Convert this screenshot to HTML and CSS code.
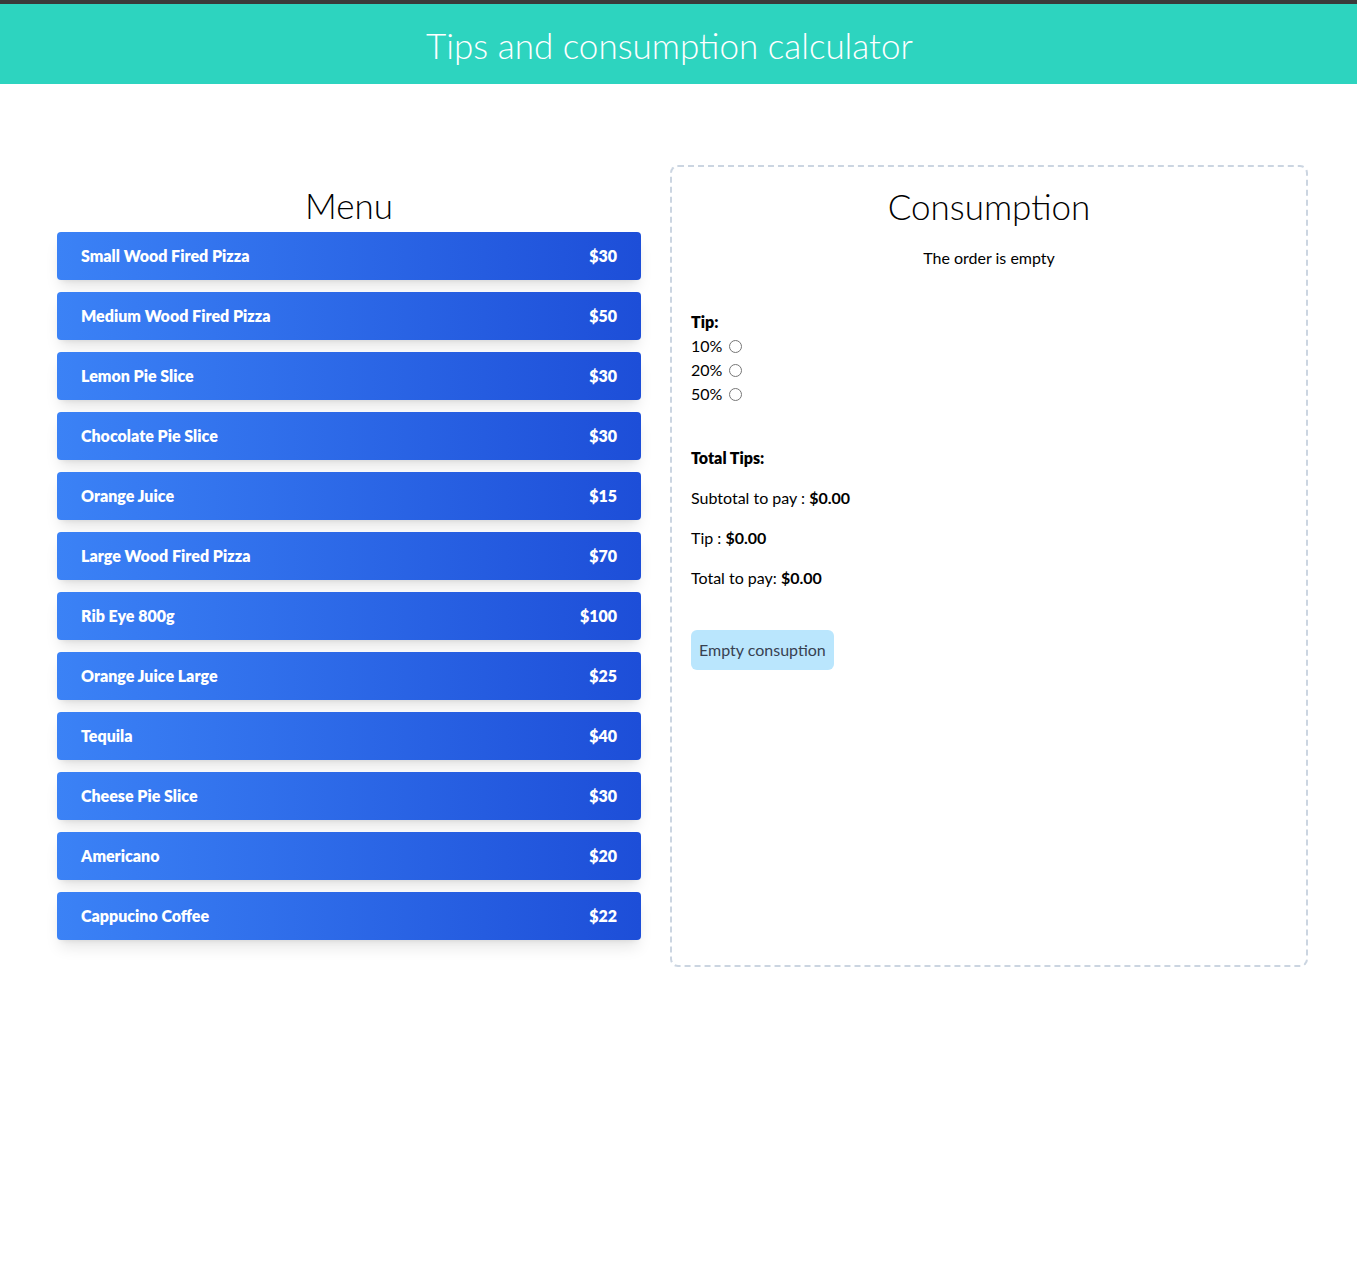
FILE: index.html
```html
<!DOCTYPE html>
<html lang="en">
<head>
<meta charset="utf-8">
<title>Tips and consumption calculator</title>
<link rel="stylesheet" href="styles.css">
</head>
<body>
<header class="topbar">
  <h1 class="title">Tips and consumption calculator</h1>
</header>
<main class="layout">
  <section class="menu">
    <h2 class="section-title">Menu</h2>
    <ul class="menu-list">
      <li><button class="menu-item"><span>Small Wood Fired Pizza</span><span>$30</span></button></li>
      <li><button class="menu-item"><span>Medium Wood Fired Pizza</span><span>$50</span></button></li>
      <li><button class="menu-item"><span>Lemon Pie Slice</span><span>$30</span></button></li>
      <li><button class="menu-item"><span>Chocolate Pie Slice</span><span>$30</span></button></li>
      <li><button class="menu-item"><span>Orange Juice</span><span>$15</span></button></li>
      <li><button class="menu-item"><span>Large Wood Fired Pizza</span><span>$70</span></button></li>
      <li><button class="menu-item"><span>Rib Eye 800g</span><span>$100</span></button></li>
      <li><button class="menu-item"><span>Orange Juice Large</span><span>$25</span></button></li>
      <li><button class="menu-item"><span>Tequila</span><span>$40</span></button></li>
      <li><button class="menu-item"><span>Cheese Pie Slice</span><span>$30</span></button></li>
      <li><button class="menu-item"><span>Americano</span><span>$20</span></button></li>
      <li><button class="menu-item"><span>Cappucino Coffee</span><span>$22</span></button></li>
    </ul>
  </section>
  <section class="consumption">
    <h2 class="section-title">Consumption</h2>
    <p class="empty">The order is empty</p>
    <div class="tips">
      <h3 class="label">Tip:</h3>
      <div class="tip-option"><label for="t10">10%</label><input type="radio" id="t10" name="tip"></div>
      <div class="tip-option"><label for="t20">20%</label><input type="radio" id="t20" name="tip"></div>
      <div class="tip-option"><label for="t50">50%</label><input type="radio" id="t50" name="tip"></div>
    </div>
    <div class="totals">
      <h3 class="label">Total Tips:</h3>
      <p class="line">Subtotal to pay : <strong>$0.00</strong></p>
      <p class="line">Tip : <strong>$0.00</strong></p>
      <p class="line">Total to pay: <strong>$0.00</strong></p>
    </div>
    <button class="clear-btn">Empty consuption</button>
  </section>
</main>
</body>
</html>
```
FILE: styles.css
```css
* { box-sizing: border-box; }

body {
  margin: 0;
  font-family: "Lato", "Open Sans", sans-serif;
  font-size: 16px;
  line-height: 24px;
  color: #000;
  background: #fff;
}

.topbar {
  background: #2dd4bf;
  border-top: 4px solid #3a3a3a;
  height: 84px;
  display: flex;
  align-items: center;
  justify-content: center;
  padding-right: 18px;
}

.title {
  margin: 0;
  color: #fff;
  font-weight: 300;
  font-size: 35px;
  line-height: 40px;
  padding-top: 2px;
}

.layout {
  display: flex;
  align-items: stretch;
  gap: 29px;
  padding: 81px 49px 0 57px;
}

.menu {
  width: 584px;
  flex: none;
  padding: 20px 0 27px;
}

.section-title {
  margin: 0;
  font-weight: 300;
  font-size: 35px;
  line-height: 40px;
  text-align: center;
}

.menu .section-title { margin-bottom: 7px; }

.menu-list {
  list-style: none;
  margin: 0;
  padding: 0;
  display: flex;
  flex-direction: column;
  gap: 12px;
}

.menu-item {
  width: 100%;
  display: flex;
  justify-content: space-between;
  align-items: center;
  padding: 12px 24px;
  border: 0;
  border-radius: 4px;
  background: linear-gradient(to right, #3b82f6, #1d4ed8);
  color: #fff;
  font-family: inherit;
  font-size: 16px;
  font-weight: 800;
  line-height: 24px;
  box-shadow: 0 10px 15px -3px rgba(0, 0, 0, 0.1), 0 4px 6px -4px rgba(0, 0, 0, 0.1);
  cursor: pointer;
}

.consumption {
  flex: 1;
  border: 2px dashed #cbd5e1;
  border-radius: 8px;
  padding: 19px;
}

.empty {
  margin: 20px 0 0;
  text-align: center;
}

.tips { margin-top: 40px; }

.label {
  margin: 0;
  font-size: 16px;
  line-height: 24px;
  font-weight: 800;
}

.tip-option {
  display: flex;
  align-items: center;
  height: 24px;
}

.tip-option input {
  margin: 0 0 0 7px;
  width: 13px;
  height: 13px;
}

.totals { margin-top: 40px; }

.line { margin: 16px 0 0; }

.clear-btn {
  margin-top: 40px;
  background: #bae6fd;
  color: #374151;
  border: 0;
  border-radius: 6px;
  padding: 8px;
  font-family: inherit;
  font-size: 16px;
  line-height: 24px;
}
```
